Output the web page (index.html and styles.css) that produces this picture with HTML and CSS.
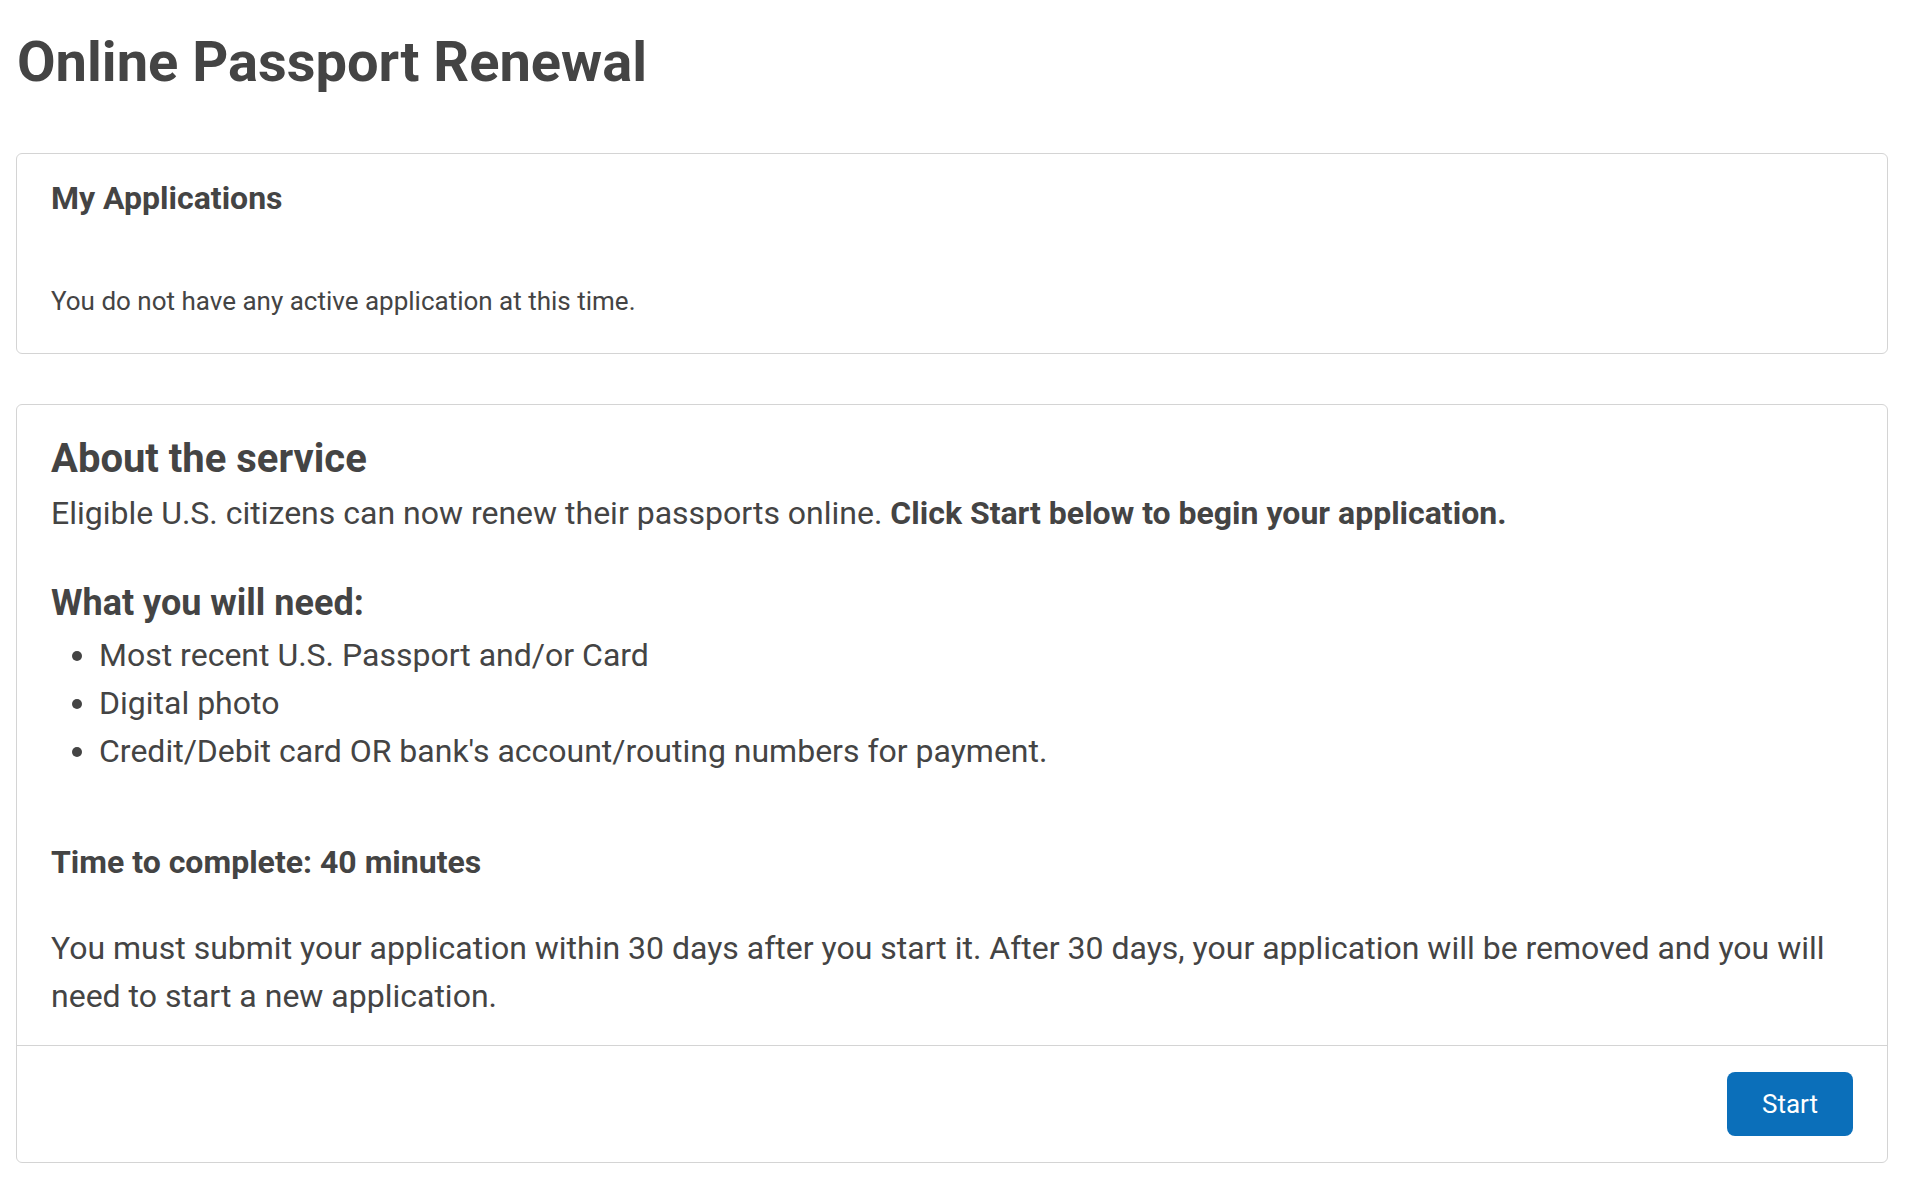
FILE: index.html
```html
<!DOCTYPE html>
<html lang="en">
<head>
<meta charset="utf-8">
<title>Online Passport Renewal</title>
<link rel="stylesheet" href="styles.css">
</head>
<body>
<main class="page">
  <h1 class="page-title">Online Passport Renewal</h1>

  <section class="card card-apps">
    <h2 class="apps-title">My Applications</h2>
    <p class="apps-empty">You do not have any active application at this time.</p>
  </section>

  <section class="card card-about">
    <div class="about-body">
      <h2 class="about-title">About the service</h2>
      <p class="text">Eligible U.S. citizens can now renew their passports online. <strong>Click Start below to begin your application.</strong></p>
      <h3 class="need-title">What you will need:</h3>
      <ul class="need-list">
        <li>Most recent U.S. Passport and/or Card</li>
        <li>Digital photo</li>
        <li>Credit/Debit card OR bank's account/routing numbers for payment.</li>
      </ul>
      <p class="text time">Time to complete: 40 minutes</p>
      <p class="text note">You must submit your application within 30 days after you start it. After 30 days, your application will be removed and you will need to start a new application.</p>
    </div>
    <div class="about-footer">
      <button class="btn-start" type="button">Start</button>
    </div>
  </section>
</main>
</body>
</html>
```

FILE: styles.css
```css
* {
  box-sizing: border-box;
}

html, body {
  margin: 0;
  padding: 0;
  background: #ffffff;
}

body {
  font-family: Roboto, "Liberation Sans", Arial, sans-serif;
  color: #444444;
}

.page {
  width: 1872px;
  margin-left: 16px;
  padding-top: 27px;
}

.page-title {
  margin: 0;
  font-size: 56px;
  line-height: 70px;
  font-weight: 700;
  color: #444444;
  padding-left: 1px;
}

.card {
  border: 1px solid #d4d4d4;
  border-radius: 6px;
  background: #ffffff;
}

.card-apps {
  margin-top: 56px;
  padding: 25px 34px 32px;
}

.apps-title {
  margin: 0;
  font-size: 32px;
  line-height: 38px;
  font-weight: 700;
}

.apps-empty {
  margin: 64px 0 0;
  font-size: 26px;
  line-height: 40px;
}

.card-about {
  margin-top: 50px;
}

.about-body {
  padding: 29px 34px 25px;
}

.about-title {
  margin: 0;
  font-size: 40px;
  line-height: 49px;
  font-weight: 700;
}

.text {
  margin: 0;
  font-size: 32px;
  line-height: 48px;
}

.text strong {
  font-weight: 700;
}

.about-title + .text {
  margin-top: 6px;
}

.need-title {
  margin: 45px 0 0;
  font-size: 36px;
  line-height: 42px;
  font-weight: 700;
}

.need-list {
  margin: 7px 0 0;
  padding-left: 48px;
  font-size: 32px;
  line-height: 48px;
}

.time {
  margin-top: 63px;
  font-weight: 700;
}

.note {
  margin-top: 38px;
}

.about-footer {
  border-top: 1px solid #d4d4d4;
  padding: 26px 34px 26px;
  display: flex;
  justify-content: flex-end;
}

.btn-start {
  font-family: Roboto, "Liberation Sans", Arial, sans-serif;
  font-size: 26px;
  line-height: 32px;
  color: #ffffff;
  background: #0b6fba;
  border: none;
  border-radius: 8px;
  height: 64px;
  padding: 0 35px;
  cursor: pointer;
}
```
